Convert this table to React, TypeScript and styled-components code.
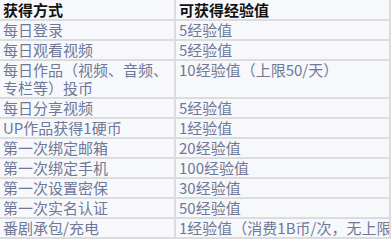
import React from 'react'
import styled, { createGlobalStyle } from 'styled-components'

const rows: [string, string, boolean?][] = [
  ['每日登录', '5经验值'],
  ['每日观看视频', '5经验值'],
  ['每日作品（视频、音频、专栏等）投币', '10经验值（上限50/天）'],
  ['每日分享视频', '5经验值'],
  ['UP作品获得1硬币', '1经验值'],
  ['第一次绑定邮箱', '20经验值'],
  ['第一次绑定手机', '100经验值'],
  ['第一次设置密保', '30经验值'],
  ['第一次实名认证', '50经验值'],
  ['番剧承包/充电', '1经验值（消费1B币/次，无上限）', true],
]

const App = () => {
  return (
    <>
      <Global />
      <Table>
        <Head>获得方式</Head>
        <Head>可获得经验值</Head>
        {rows.map(([way, exp, clip]) => (
          <React.Fragment key={way}>
            <Cell>{way}</Cell>
            <Cell $clip={clip}>{exp}</Cell>
          </React.Fragment>
        ))}
      </Table>
    </>
  )
}

export default App

const Global = createGlobalStyle`
body {
  margin: 0;
  background: #fff;
  font-family: "Noto Sans CJK SC", "Liberation Sans", sans-serif;
}
`

const Table = styled.div`
display: grid;
grid-template-columns: 174px 213px;
gap: 2px;
padding: 0 2px 2px 0;
width: 389px;
background: #dcdcdc;
`

const Cell = styled.div<{ $clip?: boolean }>`
background: #f6f8fc;
color: #6f7896;
font-size: 15px;
line-height: 18px;
padding: 0 3px;
overflow: ${p => (p.$clip ? 'hidden' : 'visible')};
white-space: ${p => (p.$clip ? 'nowrap' : 'normal')};
`

const Head = styled(Cell)`
color: #111;
font-weight: bold;
line-height: 19px;
`
